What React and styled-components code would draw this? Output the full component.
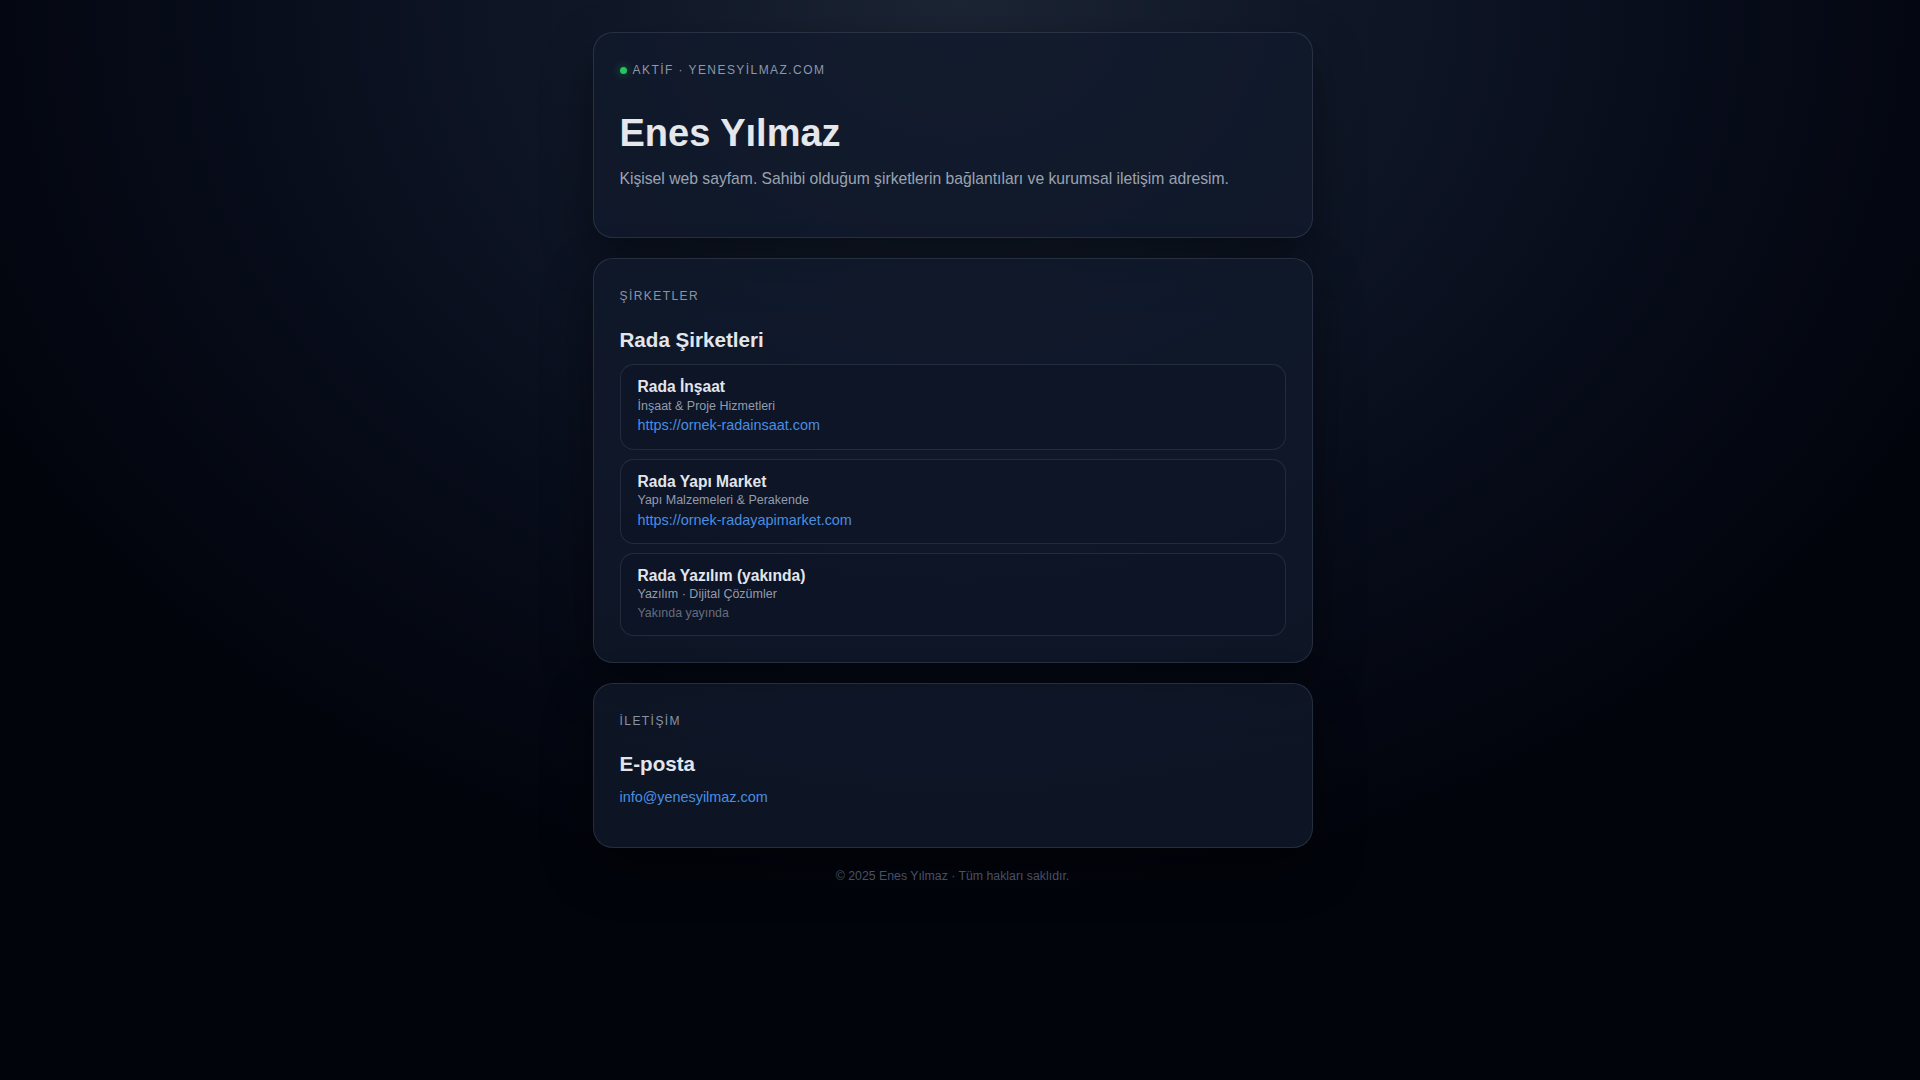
import styled, { createGlobalStyle } from 'styled-components';

const GlobalStyle = createGlobalStyle`
  html, body {
    margin: 0;
    background: #02040c;
  }
  body {
    font-family: "Liberation Sans", Arial, sans-serif;
    -webkit-font-smoothing: antialiased;
  }
`;

// right padding keeps room for the 15px scrollbar gutter of the original page
const Page = styled.div`
  min-height: 100vh;
  padding: 32px 31px 32px 16px;
  display: flex;
  flex-direction: column;
  align-items: center;
  background: radial-gradient(
    ellipse 1100px 900px at 50% 0%,
    #1c2534 0%,
    #0f1727 35%,
    #080d1b 65%,
    #02040c 100%
  );
`;

const Container = styled.main`
  width: 100%;
  max-width: 720px;
  display: flex;
  flex-direction: column;
  gap: 20px;
`;

const Card = styled.section`
  border: 1px solid rgba(148, 163, 184, 0.18);
  border-radius: 20px;
  padding: 28px 26px 26px;
  background: rgba(17, 25, 43, 0.78);
  box-shadow: 0 20px 50px rgba(0, 0, 0, 0.45);
`;

const Eyebrow = styled.div`
  display: flex;
  align-items: center;
  gap: 6px;
  font-size: 12px;
  line-height: 18px;
  letter-spacing: 0.12em;
  text-transform: uppercase;
  color: #8d97a8;
`;

const Dot = styled.span`
  width: 7px;
  height: 7px;
  border-radius: 50%;
  background: #22c55e;
  box-shadow: 0 0 8px rgba(34, 197, 94, 0.55);
`;

const HeroTitle = styled.h1`
  margin: 34px 0 0;
  font-size: 38px;
  line-height: 1.1;
  font-weight: 700;
  color: #e5e7eb;
`;

const Lead = styled.p`
  margin: 11.5px 0 20px;
  font-size: 15.7px;
  line-height: 1.6;
  color: #9aa3b2;
`;

const SectionLabel = styled.div`
  font-size: 12px;
  line-height: 18px;
  letter-spacing: 0.12em;
  text-transform: uppercase;
  color: #8a93a4;
`;

const SectionTitle = styled.h2`
  margin: ${p => p.$top || 22}px 0 ${p => p.$gap || 11}px;
  font-size: 20.6px;
  line-height: 26px;
  font-weight: 700;
  color: #e2e6ec;
`;

const CompanyList = styled.div`
  display: flex;
  flex-direction: column;
  gap: 9px;
`;

const Company = styled.article`
  display: flex;
  flex-direction: column;
  padding: 12px 16px 13px 17px;
  border: 1px solid rgba(148, 163, 184, 0.16);
  border-radius: 14px;
  background: rgba(13, 20, 37, 0.55);
`;

const CompanyName = styled.div`
  font-size: 15.6px;
  line-height: 1.25;
  font-weight: 700;
  color: #e2e6ec;
`;

const CompanyMeta = styled.div`
  margin-top: 1px;
  font-size: 12.5px;
  line-height: 1.4;
  color: #939cac;
`;

const LinkText = styled.a`
  display: block;
  font-size: 14.4px;
  line-height: 1.4;
  color: #4a8ee0;
  text-decoration: none;
  margin-bottom: ${p => p.$after || 0}px;
`;

const Note = styled.span`
  font-size: 12.4px;
  line-height: 18px;
  color: #646d7d;
`;

const Footer = styled.footer`
  margin-top: 1px;
  text-align: center;
  font-size: 12.3px;
  line-height: 14px;
  color: #485163;
`;

const companies = [
  {
    name: 'Rada İnşaat',
    meta: 'İnşaat & Proje Hizmetleri',
    url: 'https://ornek-radainsaat.com',
  },
  {
    name: 'Rada Yapı Market',
    meta: 'Yapı Malzemeleri & Perakende',
    url: 'https://ornek-radayapimarket.com',
  },
  {
    name: 'Rada Yazılım (yakında)',
    meta: 'Yazılım · Dijital Çözümler',
    note: 'Yakında yayında',
  },
];

export default function App() {
  return (
    <>
      <GlobalStyle />
      <Page>
        <Container>
          <Card>
            <Eyebrow>
              <Dot />
              Aktİf · yenesyİlmaz.com
            </Eyebrow>
            <HeroTitle>Enes Yılmaz</HeroTitle>
            <Lead>
              Kişisel web sayfam. Sahibi olduğum şirketlerin bağlantıları ve kurumsal iletişim adresim.
            </Lead>
          </Card>

          <Card>
            <SectionLabel>Şİrketler</SectionLabel>
            <SectionTitle>Rada Şirketleri</SectionTitle>
            <CompanyList>
              {companies.map(c => (
                <Company key={c.name}>
                  <CompanyName>{c.name}</CompanyName>
                  <CompanyMeta>{c.meta}</CompanyMeta>
                  {c.url ? <LinkText href={c.url}>{c.url}</LinkText> : <Note>{c.note}</Note>}
                </Company>
              ))}
            </CompanyList>
          </Card>

          <Card>
            <SectionLabel>İletİşİm</SectionLabel>
            <SectionTitle $top={21} $gap={10}>E-posta</SectionTitle>
            <LinkText href="mailto:info@yenesyilmaz.com" $after={14}>
              info@yenesyilmaz.com
            </LinkText>
          </Card>

          <Footer>© 2025 Enes Yılmaz · Tüm hakları saklıdır.</Footer>
        </Container>
      </Page>
    </>
  );
}
